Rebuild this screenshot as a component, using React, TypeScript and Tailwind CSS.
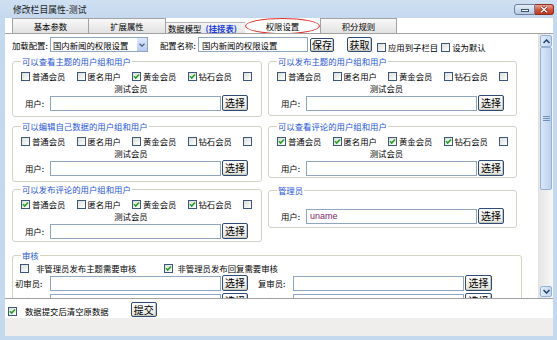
import React from "react";

const CJK = "font-['Noto_Sans_CJK_SC','Noto_Sans',sans-serif]";

function Check({ on }: { on?: boolean }) {
  return (
    <span className="w-[9px] h-[9px] shrink-0 border border-[#3b5878] bg-linear-to-br from-[#dcddd8] to-white flex items-center justify-center">
      {on && (
        <svg width="7" height="7" viewBox="0 0 7 7">
          <path d="M1 3.3 L2.7 5.1 L6 1.5" stroke="#21a121" strokeWidth="1.6" fill="none" />
        </svg>
      )}
    </span>
  );
}

function Btn({ label, className }: { label: string; className: string }) {
  return (
    <span
      className={
        "shrink-0 flex items-center justify-center border border-[#2f4c74] rounded-[2px] bg-linear-to-b from-[#fefefe] to-[#e3e3db] shadow-[inset_-1px_-1px_0_#c9c9be] text-[10px] leading-[10px] text-black " +
        className
      }
    >
      {label}
    </span>
  );
}

function Box({ className, text, textClass }: { className: string; text?: string; textClass?: string }) {
  return (
    <span className={"shrink-0 flex items-center border border-[#8fa6c0] bg-white " + className}>
      {text && <span className={"pl-[3px] " + (textClass || "")}>{text}</span>}
    </span>
  );
}

function UserRow({ className, value }: { className: string; value?: string }) {
  return (
    <div className={"flex items-center h-[16px] " + className}>
      <span className="w-[37px] pl-[12px] shrink-0">用户:</span>
      <Box
        className="w-[171px] h-[15px]"
        text={value}
        textClass="font-['Liberation_Sans',sans-serif] text-[9px] text-[#7d1f64]"
      />
      <Btn label="选择" className="ml-[1px] w-[26px] h-[16px]" />
    </div>
  );
}

const NAMES = ["普通会员", "匿名用户", "黄金会员", "钻石会员"];

function Group({ title, checks, className }: { title: string; checks: boolean[]; className: string }) {
  return (
    <fieldset className={"border border-[#d3d3c4] rounded-[3px] " + className}>
      <legend className="ml-[8px] px-[1px] text-[#1f55d6] leading-[10px]">{title}</legend>
      <div className="flex items-center h-[10px] mt-[5px] pl-[8px] gap-[11px]">
        {NAMES.map((n, i) => (
          <span key={n} className="flex items-center gap-[2px]">
            <Check on={checks[i]} />
            <span>{n}</span>
          </span>
        ))}
        <Check on={checks[4]} />
      </div>
      <div className="mt-[2px] h-[10px] text-center pr-[12px]">测试会员</div>
      <UserRow className="mt-[2px]" />
    </fieldset>
  );
}

function AuditRow({ a, b, className }: { a: string; b: string; className: string }) {
  return (
    <div className={"flex items-center h-[16px] " + className}>
      <span className="w-[37px] pl-[2px] shrink-0">{a}</span>
      <Box className="w-[171px] h-[15px]" />
      <Btn label="选择" className="ml-[1px] w-[26px] h-[16px]" />
      <span className="ml-[10px] w-[35px] shrink-0">{b}</span>
      <Box className="w-[171px] h-[15px]" />
      <Btn label="选择" className="ml-[1px] w-[27px] h-[16px]" />
    </div>
  );
}

function Tab({ label, className }: { label: React.ReactNode; className: string }) {
  return (
    <div
      className={
        "flex items-center justify-center border-t border-r border-[#a3a3a3] bg-linear-to-b from-[#f8f8f8] to-[#e2e2e2] " +
        className
      }
    >
      {label}
    </div>
  );
}

function Scrollbar() {
  return (
    <div className="w-[15px] shrink-0 flex flex-col px-[1px] py-[1px] bg-linear-to-r from-[#e6e6e6] to-[#f7f7f7] border-l border-[#e2e2e2]">
      <div className="h-[12px] shrink-0 rounded-[2px] border border-[#92b1d6] bg-linear-to-r from-[#e2ecf8] to-[#c4d7ef] flex items-center justify-center">
        <svg width="7" height="5" viewBox="0 0 7 5">
          <path d="M0.5 4 L3.5 1 L6.5 4" stroke="#24406a" strokeWidth="1.5" fill="none" />
        </svg>
      </div>
      <div className="h-[143px] shrink-0 rounded-[2px] border border-[#92b1d6] bg-linear-to-r from-[#dbe7f7] to-[#bcd1ec] flex items-center justify-center">
        <svg width="7" height="6" viewBox="0 0 7 6">
          <path d="M0 0.5 H7 M0 2.5 H7 M0 4.5 H7" stroke="#6f8fb8" strokeWidth="1" />
        </svg>
      </div>
      <div className="flex-1" />
      <div className="h-[11px] shrink-0 rounded-[2px] border border-[#92b1d6] bg-linear-to-r from-[#e2ecf8] to-[#c4d7ef] flex items-center justify-center">
        <svg width="7" height="5" viewBox="0 0 7 5">
          <path d="M0.5 1 L3.5 4 L6.5 1" stroke="#24406a" strokeWidth="1.5" fill="none" />
        </svg>
      </div>
    </div>
  );
}

export default function App() {
  return (
    <div
      className={`w-[557px] h-[340px] overflow-hidden flex flex-col bg-[#c4d8ee] text-[8.4px] leading-[10px] text-black ${CJK}`}
    >
      {/* title bar */}
      <div className="h-[18px] shrink-0 flex items-start bg-linear-to-b from-[#cfe0f2] to-[#c4d8ee]">
        <span className="ml-[13px] mt-[5px] text-[8.8px] leading-[10px] text-[#1a1a1a]">修改栏目属性-测试</span>
        <div className="ml-auto mr-[3px] mt-[4px] flex">
          <span className="w-[21px] h-[11px] rounded-l-[3px] border border-[#6d809d] bg-linear-to-b from-[#e6eef8] to-[#b6c9e1] flex items-end justify-center pb-[2px]">
            <span className="w-[8px] h-[3px] bg-white border border-[#3c4f6b]" />
          </span>
          <span className="w-[19px] h-[11px] rounded-r-[3px] border border-l-0 border-[#8b2e22] bg-linear-to-b from-[#e9a393] via-[#d2563f] to-[#c13a21] flex items-center justify-center">
            <svg width="8" height="7" viewBox="0 0 8 7">
              <path d="M1 0.8 L7 6.2 M7 0.8 L1 6.2" stroke="#6b1d12" strokeWidth="2.6" />
              <path d="M1 0.8 L7 6.2 M7 0.8 L1 6.2" stroke="#ffffff" strokeWidth="1.5" />
            </svg>
          </span>
        </div>
      </div>

      {/* window body */}
      <div className="flex-1 min-h-0 flex flex-col ml-[5px] mr-[4px] mb-[4px] bg-white">
        {/* tabs */}
        <div className="h-[15px] shrink-0 flex items-stretch pl-[7px]">
          <Tab label="基本参数" className="w-[77px] border-l" />
          <Tab label="扩展属性" className="w-[77px]" />
          <div className="w-[79px] flex flex-col justify-end">
            <div className="h-[11px] flex items-center pl-[2px] border-t border-[#b5b5b5] bg-linear-to-b from-[#f4f4f4] to-[#e6e6e6]">
              <span>数据模型</span>
              <span className="ml-[4px] font-bold text-[#1b3fd9]">(挂接表)</span>
            </div>
          </div>
          <div className="w-[75px] h-[16px] rounded-[50%] border border-[#e0302b] flex items-center justify-center">
            权限设置
          </div>
          <Tab label="积分规则" className="w-[77px] border-l" />
        </div>

        {/* scroll area */}
        <div className="h-[266px] shrink-0 flex border-y border-[#a2a2a2]">
          <div className="flex-1 overflow-hidden pl-[7px]">
            {/* config row */}
            <div className="mt-[3px] h-[15px] flex items-center">
              <span className="w-[38px] shrink-0">加载配置:</span>
              <span className="w-[98px] h-[15px] shrink-0 flex items-stretch border border-[#8fa6c0]">
                <span className="flex-1 pl-[2px] flex items-center">国内新闻的权限设置</span>
                <span className="w-[10px] bg-linear-to-b from-[#dfe7fb] to-[#b9cbf2] flex items-center justify-center">
                  <svg width="6" height="4" viewBox="0 0 6 4">
                    <path d="M0.5 0.8 L3 3.2 L5.5 0.8" stroke="#4d6185" strokeWidth="1.3" fill="none" />
                  </svg>
                </span>
              </span>
              <span className="ml-[12px] w-[38px] shrink-0">配置名称:</span>
              <Box className="w-[110px] h-[15px]" text="国内新闻的权限设置" />
              <Btn label="保存" className="ml-[2px] w-[24px] h-[14px]" />
              <Btn label="获取" className="ml-[13px] w-[25px] h-[15px]" />
              <span className="ml-[5px] mt-[5px] flex items-center">
                <Check />
                <span className="ml-[2px]">应用到子栏目</span>
                <span className="ml-[3px]">
                  <Check />
                </span>
                <span className="ml-[2px]">设为默认</span>
              </span>
            </div>

            {/* two columns */}
            <div className="mt-[4px] flex gap-[6px] items-start">
              <div className="w-[250px] flex flex-col">
                <Group title="可以查看主题的用户组和用户" checks={[false, false, true, true, false]} className="h-[61px]" />
                <Group title="可以编辑自己数据的用户组和用户" checks={[false, false, false, false, false]} className="h-[61px] mt-[4px]" />
                <Group title="可以发布评论的用户组和用户" checks={[true, false, true, true, false]} className="h-[58px] mt-[2px]" />
              </div>
              <div className="w-[249px] flex flex-col">
                <Group title="可以发布主题的用户组和用户" checks={[false, false, false, false, false]} className="h-[60px]" />
                <Group title="可以查看评论的用户组和用户" checks={[true, true, true, true, false]} className="h-[57px] mt-[5px]" />
                <fieldset className="h-[43px] mt-[7px] border border-[#d3d3c4] rounded-[3px]">
                  <legend className="ml-[8px] px-[1px] text-[#1f55d6] leading-[10px]">管理员</legend>
                  <UserRow className="mt-[13px]" value="uname" />
                </fieldset>
              </div>
            </div>

            {/* audit */}
            <fieldset className="mt-[8px] w-[510px] h-[70px] border border-[#d3d3c4] rounded-[3px]">
              <legend className="ml-[8px] px-[1px] text-[#1f55d6] leading-[10px]">审核</legend>
              <div className="mt-[3px] h-[10px] flex items-center pl-[7px]">
                <Check />
                <span className="ml-[7px]">非管理员发布主题需要审核</span>
                <span className="ml-[27px]">
                  <Check on />
                </span>
                <span className="ml-[5px]">非管理员发布回复需要审核</span>
              </div>
              <AuditRow a="初审员:" b="复审员:" className="mt-[2px]" />
              <AuditRow a="终审员:" b="终审员:" className="mt-[2px]" />
            </fieldset>
          </div>
          <Scrollbar />
        </div>

        {/* bottom */}
        <div className="h-[19px] shrink-0 flex items-start pt-[3px] pl-[3px]">
          <span className="mt-[5px]">
            <Check on />
          </span>
          <span className="ml-[8px] mt-[4px]">数据提交后清空原数据</span>
          <Btn label="提交" className="ml-[22px] w-[26px] h-[15px]" />
        </div>
        <div className="flex-1 bg-[#f0eeed]" />
      </div>
    </div>
  );
}
